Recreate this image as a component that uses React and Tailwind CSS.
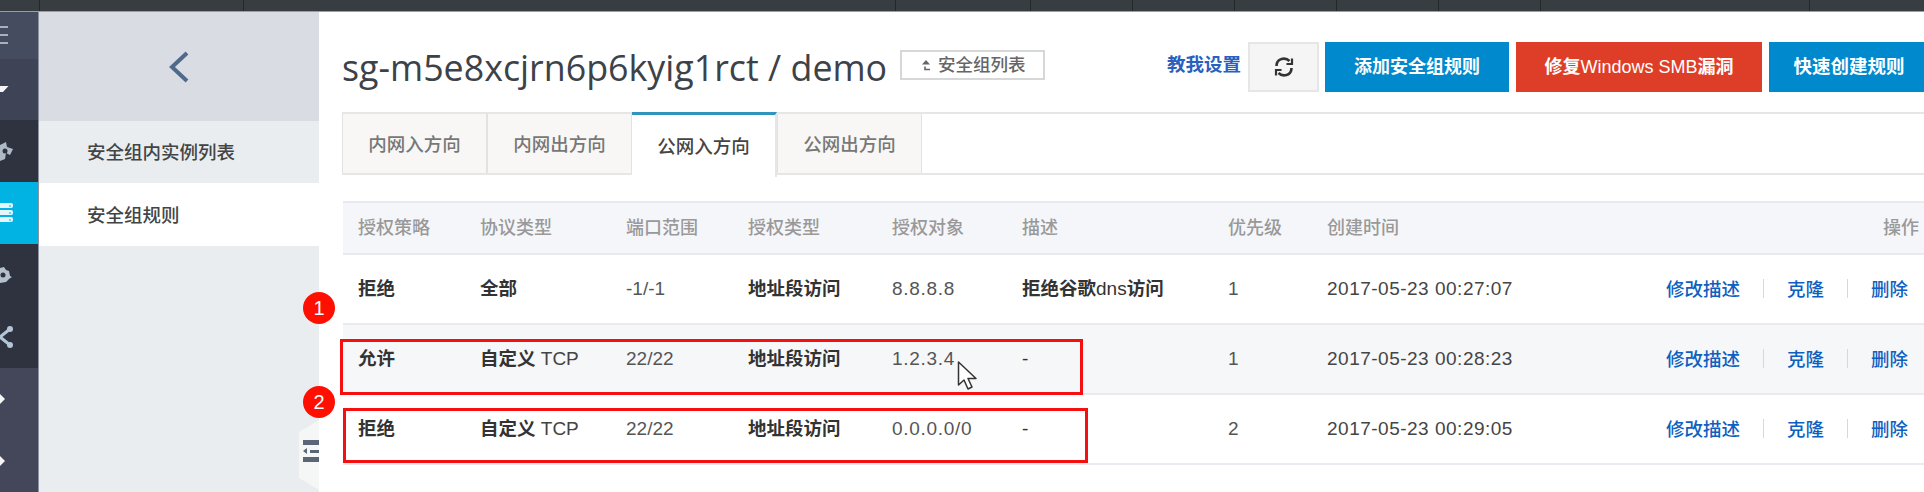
import React from 'react';

const FONT = '[font-family:"Liberation_Sans","Noto_Sans_CJK_SC",sans-serif]';

const dividers = ['left-[39px]', 'left-[243px]', 'left-[895px]', 'left-[1030px]', 'left-[1132px]', 'left-[1234px]', 'left-[1336px]', 'left-[1438px]', 'left-[1540px]', 'left-[1809px]'];

const tabs = [
  { label: '内网入方向' },
  { label: '内网出方向' },
  { label: '公网入方向', active: true },
  { label: '公网出方向' },
];

const headers = ['授权策略', '协议类型', '端口范围', '授权类型', '授权对象', '描述', '优先级', '创建时间'];
const widths = ['w-[122px]', 'w-[146px]', 'w-[122px]', 'w-[144px]', 'w-[130px]', 'w-[206px]', 'w-[99px]', 'w-[340px]'];

const rows = [
  { policy: '拒绝', proto: '全部', port: '-1/-1', target: '8.8.8.8', desc: '拒绝谷歌', prio: '1', time: '2017-05-23 00:27:07' },
  { policy: '允许', proto: '自定义', tcp: true, port: '22/22', target: '1.2.3.4', prio: '1', time: '2017-05-23 00:28:23', shaded: true },
  { policy: '拒绝', proto: '自定义', tcp: true, port: '22/22', target: '0.0.0.0/0', prio: '2', time: '2017-05-23 00:29:05' },
];

function ServerBar() {
  return (
    <div className="h-[5px] w-[13px] bg-[#e4f6fc] rounded-r-[2px] flex justify-end items-center pr-[2px]">
      <div className="w-[2px] h-[2px] rounded-full bg-[#4cc6ea]" />
    </div>
  );
}

function Sidebar() {
  return (
    <div className="w-[39px] shrink-0 flex flex-col overflow-hidden border-r border-[#8b93a0]">
      <div className="h-[47px] bg-[#454c5f] flex flex-col gap-[6px] pt-[14px]">
        <div className="h-[2px] w-[8px] bg-[#aab0ba]" />
        <div className="h-[2px] w-[8px] bg-[#aab0ba]" />
        <div className="h-[2px] w-[8px] bg-[#aab0ba]" />
      </div>
      <div className="h-[62px] bg-[#3e4356] flex items-center">
        <svg width="9" height="6" viewBox="0 0 9 6"><path d="M0 0h8.500L3 6H0z" fill="#f4f5f7" /></svg>
      </div>
      <div className="h-[62px] bg-[#2f3340] flex items-center">
        <svg width="14" height="24" viewBox="0 0 14 24" fill="#aeb9c6">
          <path d="M0 6l6-3 1 5 6 2-3 6-4-2-1 6-5 2z" />
          <circle cx="5" cy="12" r="2.500" fill="#2f3340" />
        </svg>
      </div>
      <div className="h-[63px] bg-[#00b3e3] flex flex-col justify-center gap-[2px]">
        <ServerBar />
        <ServerBar />
        <ServerBar />
      </div>
      <div className="h-[63px] bg-[#2f3340] flex items-center">
        <svg width="12" height="20" viewBox="0 0 12 20" fill="#b4c0cc">
          <path d="M0 3l4-1 2 3 3 1 1 5 2 1-3 2-3 3-6 1z" />
          <circle cx="3" cy="10" r="2.500" fill="#2f3340" />
        </svg>
      </div>
      <div className="h-[62px] bg-[#2f3340] flex items-center">
        <svg width="13" height="24" viewBox="0 0 13 24">
          <path d="M0 12L10 4M0 12l10 8" stroke="#b4c6d6" strokeWidth="3" />
          <circle cx="10" cy="4" r="3" fill="#b4c6d6" />
          <circle cx="10" cy="20" r="3" fill="#b4c6d6" />
        </svg>
      </div>
      <div className="flex-1 bg-[#434759] flex flex-col">
        <div className="h-[62px] flex items-center">
          <svg width="6" height="10" viewBox="0 0 6 10"><path d="M0 0l5 5-5 5z" fill="#f6f6f6" /></svg>
        </div>
        <div className="h-[62px] flex items-center">
          <svg width="6" height="10" viewBox="0 0 6 10"><path d="M0 0l5 5-5 5z" fill="#f6f6f6" /></svg>
        </div>
      </div>
    </div>
  );
}

function SubNav() {
  return (
    <div className="w-[280px] shrink-0 flex flex-col bg-[#e9edf0]">
      <div className="h-[109px] bg-[#d9dde3] flex items-center justify-center">
        <svg width="20" height="32" viewBox="0 0 20 32" fill="none">
          <path d="M18 2L3 16l15 14" stroke="#4f6a8a" strokeWidth="4" />
        </svg>
      </div>
      <div className="h-[62px] pl-[48px] pt-[2px] flex items-center text-[18.5px] font-medium text-[#444]">安全组内实例列表</div>
      <div className="h-[63px] pl-[48px] pt-[3px] flex items-center text-[18.5px] font-medium text-[#444] bg-white">安全组规则</div>
      <div className="flex-1" />
    </div>
  );
}

function RulesTable() {
  return (
    <table className="ml-px w-[1581px] table-fixed border-collapse mt-[26px] text-[19px] text-[#555]">
      <thead>
        <tr className="h-[52px] bg-[#f5f6fa] border-y-2 border-[#e8eaef] text-[#999] text-[18px] font-medium">
          {headers.map((h, i) => (
            <th key={h} className={`${widths[i]} pl-[15px] text-left font-medium`}>{h}</th>
          ))}
          <th className="pr-[5px] text-right font-medium">操作</th>
        </tr>
      </thead>
      <tbody>
        {rows.map((r) => (
          <tr key={r.time} className={`h-[70px] border-b-2 border-[#e8eaef] ${r.shaded ? 'bg-[#f6f7f9]' : 'bg-white'}`}>
            <td className="pl-[15px] text-[18.5px] font-bold text-[#333]">{r.policy}</td>
            <td className="pl-[15px]">
              <span className="text-[18.5px] font-bold text-[#333]">{r.proto}</span>
              {r.tcp && <span className="text-[#444]"> TCP</span>}
            </td>
            <td className="pl-[15px]">{r.port}</td>
            <td className="pl-[15px] text-[18.5px] font-bold text-[#333]">地址段访问</td>
            <td className="pl-[15px] tracking-[0.7px]">{r.target}</td>
            <td className="pl-[15px] text-[#333]">
              {r.desc ? (
                <span className="text-[18.5px] font-bold">{r.desc}<span className="font-normal text-[19px]">dns</span>访问</span>
              ) : '-'}
            </td>
            <td className="pl-[15px]">{r.prio}</td>
            <td className="pl-[15px] text-[#444] tracking-[0.5px]">{r.time}</td>
            <td>
              <div className="flex justify-end items-center gap-[23px] pr-[16px] pt-[2px] text-[18.5px] font-medium text-[#0f5fc0]">
                <span>修改描述</span>
                <span className="w-px h-[19px] bg-[#d8d8d8] -mt-[3px]" />
                <span>克隆</span>
                <span className="w-px h-[19px] bg-[#d8d8d8] -mt-[3px]" />
                <span>删除</span>
              </div>
            </td>
          </tr>
        ))}
      </tbody>
    </table>
  );
}

function Main() {
  return (
    <div className="flex-1 min-w-0 bg-white pl-[23px] pt-[30px] overflow-hidden">
      <div className="h-[50px] flex items-center">
        <div className="text-[35.8px] text-[#3d4249] [font-family:'Open_Sans','Noto_Sans_CJK_SC',sans-serif] whitespace-nowrap pt-[2px]">sg-m5e8xcjrn6p6kyig1rct / demo</div>
        <button className="ml-[13px] -mt-[4px] w-[145px] h-[30px] border-2 border-[#d6d8d8] flex items-center justify-center gap-[6px] text-[17.5px] font-medium text-[#666] shrink-0">
          <svg width="12" height="14" viewBox="0 0 12 14" fill="none">
            <path d="M2 6.500L6 2l4 4.500z" fill="#666" />
            <path d="M5 8.500v3h5" stroke="#666" strokeWidth="1.600" />
          </svg>
          安全组列表
        </button>
        <div className="ml-auto -mr-[5px] flex items-center shrink-0">
          <a className="w-[74px] text-[18.5px] font-bold text-[#2a5fbf] whitespace-nowrap -mt-[4px]">教我设置</a>
          <button className="ml-[7px] w-[71px] h-[50px] bg-[#f5f5f5] border-2 border-[#e6e6e6] flex items-center justify-center">
            <svg width="20" height="22" viewBox="0 0 20 22" fill="none" stroke="#333" strokeWidth="2.600">
              <path d="M2.500 10c0-8 9-9 13-5" />
              <path d="M18 2.500v5.500h-5.500" strokeWidth="2.200" />
              <path d="M17.500 12c0 8-9 9-13 5" />
              <path d="M2 19.500V14h5.500" strokeWidth="2.200" />
            </svg>
          </button>
          <button className="ml-[6px] w-[184px] h-[50px] bg-[#0089cc] text-white text-[18px] font-bold">添加安全组规则</button>
          <button className="ml-[7px] w-[246px] h-[50px] bg-[#de3e27] text-white text-[18px]"><span className="font-bold">修复</span>Windows SMB<span className="font-bold">漏洞</span></button>
          <button className="ml-[7px] w-[160px] h-[50px] bg-[#0089cc] text-white text-[18.5px] font-bold">快速创建规则</button>
        </div>
      </div>
      <div className="mt-[20px] h-[63px] flex border-y-2 border-[#e6e6e6]">
        {tabs.map((t) => (
          <div
            key={t.label}
            className={t.active
              ? 'w-[145px] -my-[2px] h-[65px] pt-[1px] border-t-[3px] border-t-[#2f95bd] border-r-2 border-r-[#e6e6e6] bg-white flex items-center justify-center text-[18.5px] font-medium text-[#444]'
              : 'w-[145px] pt-[2px] bg-[#f8f7f5] border-x border-[#e2e2e2] flex items-center justify-center text-[18.5px] font-medium text-[#777]'}
          >
            {t.label}
          </div>
        ))}
      </div>
      <RulesTable />
    </div>
  );
}

function Marker({ className, n }) {
  return (
    <div className={`absolute left-[303px] w-[32px] h-[32px] rounded-full bg-[#ff0f00] text-white text-[20px] flex items-center justify-center ${className}`}>{n}</div>
  );
}

export default function App() {
  return (
    <div className={`relative w-[1924px] h-[492px] overflow-hidden flex flex-col bg-white ${FONT}`}>
      <div className="h-[12px] shrink-0 bg-[#373d41] border-b border-[#9a9ea1] relative">
        {dividers.map((d) => (
          <div key={d} className={`absolute top-0 h-[11px] w-px bg-[#23282b] ${d}`} />
        ))}
      </div>
      <div className="flex-1 min-h-0 flex">
        <Sidebar />
        <SubNav />
        <Main />
      </div>

      {/* collapse handle */}
      <div className="absolute left-[299px] top-[420px] w-[20px] h-[70px] pb-[8px] bg-[#f5f6f6] [clip-path:polygon(0_12px,100%_0,100%_100%,0_58px)] flex flex-col items-end justify-center gap-[4px]">
        <div className="h-[5px] w-[16px] bg-[#5a6578]" />
        <div className="h-[4px] w-[16px] flex items-center justify-between">
          <div className="w-0 h-0 border-y-[3px] border-y-transparent border-r-[4px] border-r-[#5a6578]" />
          <div className="h-[3px] w-[9px] bg-[#5a6578]" />
        </div>
        <div className="h-[5px] w-[16px] bg-[#5a6578]" />
      </div>

      {/* annotations on top of the screenshot */}
      <Marker className="top-[292px]" n="1" />
      <Marker className="top-[386px]" n="2" />
      <div className="absolute left-[340px] top-[339px] w-[743px] h-[56px] border-[3px] border-[#f40f10]" />
      <div className="absolute left-[343px] top-[408px] w-[745px] h-[55px] border-[3px] border-[#f40f10]" />
      <svg className="absolute left-[957px] top-[361px]" width="22" height="30" viewBox="0 0 22 30">
        <path d="M1.500 1v23l5.500-5 4 9 4-2-4-8.500h8z" fill="#fff" stroke="#333" strokeWidth="1.500" strokeLinejoin="round" />
      </svg>
    </div>
  );
}
